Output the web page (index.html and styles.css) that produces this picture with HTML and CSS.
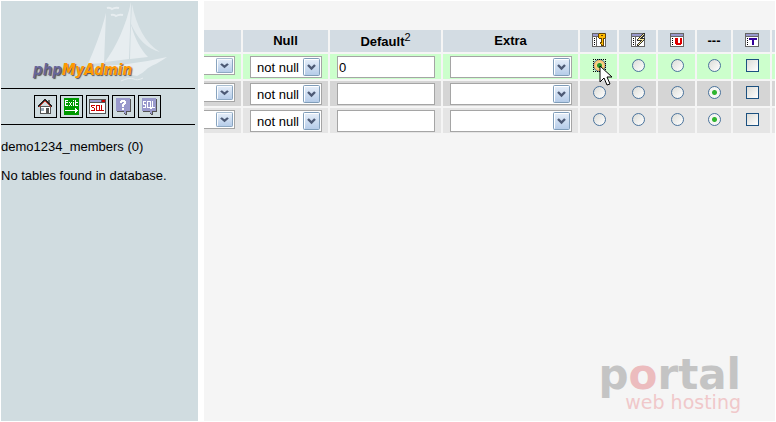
FILE: index.html
```
<!DOCTYPE html>
<html lang="en">
<head>
    <meta charset="utf-8">
    <title>phpMyAdmin</title>
    <link rel="stylesheet" href="styles.css">
</head>
<body>

    <!-- Left navigation -->
    <div class="nav">
        <a class="logo" href="#">
            <svg class="ship" width="82" height="84" viewBox="0 0 82 84">
                <g fill="#e7edf0">
                    <path d="M19 12 C14 32 7 49 1 63 L17 62 Z"/>
                    <path d="M44 1 C39 25 29 46 18 61 L42 58 Z"/>
                    <path d="M45 3 C49 24 58 42 73 51 C60 48 50 37 44 23 Z" opacity=".8"/>
                    <path d="M44 24 C48 38 54 49 61 56 L43 58 Z"/>
                    <path d="M1 66 C25 65 55 62 80 56 C72 62 66 64 61 67 C58 70 54 73 50 75 C35 71 18 72 3 72 Z"/>
                </g>
                <g fill="none" stroke="#e7edf0" stroke-width="2">
                    <path d="M20 7 q3 -1 5 1 q3 -2 7 -1"/>
                    <path d="M24 14 q3 -1 5 1 q3 -2 7 -1"/>
                    <path d="M34 80 q8 -4 13 -2 q3 2 9 -1" stroke-width="1"/>
                </g>
            </svg>
            <span class="name">php<b>MyAdmin</b></span>
        </a>
        <div class="links">
            <a href="#" title="Home"><svg width="15" height="15" viewBox="0 0 15 15" shape-rendering="crispEdges">
                <path d="M2 7h10v7H2z" fill="#fff" stroke="#555"/>
                <path d="M10 1h2v5h-2z" fill="#666"/>
                <path d="M0 8L7 1l7 7" fill="none" stroke="#222" stroke-width="2"/>
                <path d="M1 8L7 2l6 6" fill="none" stroke="#d63a2c" stroke-width="1"/>
                <path d="M3 9h3v3H3z" fill="#9ab"/>
                <path d="M8 9h3v6H8z" fill="#555"/>
            </svg></a>
            <a href="#" title="Exit"><svg width="15" height="17" viewBox="0 0 15 17" shape-rendering="crispEdges">
                <path d="M0 0h15v17H0z" fill="#090"/>
                <path d="M1 2h3v1H2v1h2v1H2v2h2v1H1zM5 4h1v1H5zM7 4h1v1H7zM6 5h1v2H6zM5 7h1v1H5zM7 7h1v1H7zM9 2h1v1H9zM9 4h1v4H9zM11 2h1v2h2v1h-2v2h2v1h-3z" fill="#fff"/>
                <path d="M1 12h10v-2h1v1h1v1h1v1h-1v1h-1v1h-1v-2H1z" fill="#fff"/>
            </svg></a>
            <a href="#" title="Query window"><svg width="17" height="15" viewBox="0 0 17 15" shape-rendering="crispEdges">
                <path d="M0 0h17v15H0z" fill="#555"/>
                <path d="M1 1h11v2H1z" fill="#99c"/>
                <path d="M13 1h3v2h-3z" fill="#c00"/>
                <path d="M1 4h15v10H1z" fill="#fff"/>
                <path d="M2 6h4v1H3v1h2v1h1v3H2v-1h3V9H3V8H2zM7 6h4v5h1v1H7zM8 7v4h2V7zM12 6h1v5h2v1h-3z" fill="#c00" fill-rule="evenodd"/>
            </svg></a>
            <a href="#" title="phpMyAdmin documentation"><svg width="15" height="17" viewBox="0 0 15 17" shape-rendering="crispEdges">
                <path d="M1 1h14v13h-4v3H9v-1H8v-2H1z" fill="#555"/>
                <path d="M0 0h14v13h-4v3H9v-1H8v-2H0z" fill="#99c"/>
                <path d="M4 3h1V2h4v1h1v3H9v1H8v2H6V6h1V5h1V4H6v1H4zM6 10h2v2H6z" fill="#fff"/>
            </svg></a>
            <a href="#" title="MySQL documentation"><svg width="15" height="17" viewBox="0 0 15 17" shape-rendering="crispEdges">
                <path d="M1 1h14v13h-4v3H9v-1H8v-2H1z" fill="#555"/>
                <path d="M0 0h14v13h-4v3H9v-1H8v-2H0z" fill="#99c"/>
                <path d="M1 3h3v1H2v2h2v4H1V9h2V7H1zM5 3h4v6h1v2H8v-1H5zM6 4v5h2V4zM10 3h1v6h2v1h-3z" fill="#fff" fill-rule="evenodd"/>
            </svg></a>
        </div>
        <p>demo1234_members (0)</p>
        <p>No tables found in database.</p>
    </div>

    <!-- Field editor -->
    <form class="main">
        <table>
            <colgroup>
                <col class="w37"><col class="w85"><col class="w111"><col class="w135">
                <col class="w37"><col class="w37"><col class="w37"><col class="w34"><col class="w37"><col>
            </colgroup>
            <tr>
                <th></th>
                <th>Null</th>
                <th>Default<sup>2</sup></th>
                <th>Extra</th>
                <th title="Primary"><svg width="14" height="14" viewBox="0 0 14 14" shape-rendering="crispEdges">
                    <path d="M0 0h14v14H0z" fill="#666"/><path d="M1 1h12v2H1z" fill="#99c"/><path d="M1 4h3v9H1zM5 4h8v9H5z" fill="#fff"/>
                    <path d="M2 5h1v1H2zM2 7h1v1H2zM2 9h1v1H2zM2 11h1v1H2z" fill="#000"/>
                    <path d="M7 0h6v1h1v4h-1v1h-1v7H9v-2H8V9h1V6H7V5H6V1h1z" fill="#640"/>
                    <path d="M7 1h6v4h-2v7h-1v-1H9v-1h1V5H7z" fill="#fb0"/><path d="M9 2h2v1H9z" fill="#640"/>
                </svg></th>
                <th title="Index"><svg width="14" height="14" viewBox="0 0 14 14" shape-rendering="crispEdges">
                    <path d="M0 0h14v14H0z" fill="#666"/><path d="M1 1h12v2H1z" fill="#99c"/><path d="M1 4h3v9H1zM5 4h8v9H5z" fill="#fff"/>
                    <path d="M2 5h1v1H2zM2 7h1v1H2zM2 9h1v1H2zM2 11h1v1H2z" fill="#000"/>
                    <path d="M12 0h2v2l-3 3h3v2l-7 6H6v-2l3-3H6V6z" fill="#333"/>
                    <path d="M12 1h1L9 5v1h4L7 12v-1l4-4H7V6z" fill="#fe9"/>
                </svg></th>
                <th title="Unique"><svg width="14" height="14" viewBox="0 0 14 14" shape-rendering="crispEdges">
                    <path d="M0 0h14v14H0z" fill="#666"/><path d="M1 1h12v2H1z" fill="#99c"/><path d="M1 4h12v9H1z" fill="#fff"/>
                    <path d="M2 5h1v1H2zM2 7h1v1H2zM2 9h1v1H2zM2 11h1v1H2z" fill="#000"/>
                    <path d="M5 5h3v5h2V5h2v6h-1v1H6v-1H5z" fill="#d00"/>
                </svg></th>
                <th>---</th>
                <th title="Fulltext"><svg width="14" height="14" viewBox="0 0 14 14" shape-rendering="crispEdges">
                    <path d="M0 0h14v14H0z" fill="#666"/><path d="M1 1h12v2H1z" fill="#99c"/><path d="M1 4h12v9H1z" fill="#fff"/>
                    <path d="M2 5h1v1H2zM2 7h1v1H2zM2 9h1v1H2zM2 11h1v1H2z" fill="#000"/>
                    <path d="M4 5h8v2h-3v5H7V7H4z" fill="#309"/>
                </svg></th>
                <th></th>
            </tr>
            <tr class="marked">
                <td><div class="cut"><select class="short" aria-label="Attributes 1"><option></option></select></div></td>
                <td><select class="null" aria-label="Null 1"><option>not null</option><option>null</option></select></td>
                <td><input type="text" value="0" aria-label="Default 1"></td>
                <td><select class="extra" aria-label="Extra 1"><option></option><option>auto_increment</option></select></td>
                <td><span class="pointed"><input type="radio" class="hot" name="key1" aria-label="Primary 1" checked>
                    <svg class="cursor" width="13" height="22" viewBox="0 0 13 22">
                        <path d="M1 1v16l4-4 3 7 3-1-3-7h5z" fill="#fff" stroke="#000"/>
                    </svg></span></td>
                <td><input type="radio" name="key1" aria-label="Index 1"></td>
                <td><input type="radio" name="key1" aria-label="Unique 1"></td>
                <td><input type="radio" name="key1" aria-label="No key 1"></td>
                <td><input type="checkbox" aria-label="Fulltext 1"></td>
                <td></td>
            </tr>
            <tr class="odd">
                <td><div class="cut"><select class="short" aria-label="Attributes 2"><option></option></select></div></td>
                <td><select class="null" aria-label="Null 2"><option>not null</option><option>null</option></select></td>
                <td><input type="text" aria-label="Default 2"></td>
                <td><select class="extra" aria-label="Extra 2"><option></option><option>auto_increment</option></select></td>
                <td><input type="radio" name="key2" aria-label="Primary 2"></td>
                <td><input type="radio" name="key2" aria-label="Index 2"></td>
                <td><input type="radio" name="key2" aria-label="Unique 2"></td>
                <td><input type="radio" name="key2" aria-label="No key 2" checked></td>
                <td><input type="checkbox" aria-label="Fulltext 2"></td>
                <td></td>
            </tr>
            <tr class="even">
                <td><div class="cut"><select class="short" aria-label="Attributes 3"><option></option></select></div></td>
                <td><select class="null" aria-label="Null 3"><option>not null</option><option>null</option></select></td>
                <td><input type="text" aria-label="Default 3"></td>
                <td><select class="extra" aria-label="Extra 3"><option></option><option>auto_increment</option></select></td>
                <td><input type="radio" name="key3" aria-label="Primary 3"></td>
                <td><input type="radio" name="key3" aria-label="Index 3"></td>
                <td><input type="radio" name="key3" aria-label="Unique 3"></td>
                <td><input type="radio" name="key3" aria-label="No key 3" checked></td>
                <td><input type="checkbox" aria-label="Fulltext 3"></td>
                <td></td>
            </tr>
        </table>

        <div class="brand">
            <div class="portal">p<span>o</span>rtal</div>
            <div class="hosting">web hosting</div>
        </div>
    </form>

</body>
</html>
```
FILE: styles.css
```
* {
    box-sizing: border-box;
}
body {
    display: flex;
    gap: 6px;
    min-height: 100vh;
    margin: 0;
    padding: 1px;
    background: #fff;
    color: #000;
    font-family: Arial, "Liberation Sans", sans-serif;
    font-size: 13px;
    line-height: 15px;
}

/* Left navigation */
.nav {
    flex: 0 0 197px;
    padding-right: 3px;
    background: #d0dce0;
}
.nav p {
    margin: 14px 0;
}
.logo {
    display: block;
    position: relative;
    height: 87px;
    padding: 60px 0 0 32px;
    text-decoration: none;
}
.ship {
    position: absolute;
    left: 86px;
    top: 0;
}
.name {
    position: relative;
    color: #669;
    font: italic bold 15px/18px "DejaVu Sans Condensed", "DejaVu Sans", sans-serif;
    text-shadow: 1px 1px 1px #555;
}
.name b {
    color: #f90;
}
.links {
    display: flex;
    justify-content: center;
    gap: 3px;
    padding: 6px 1px 6px 0;
    border-top: 1px solid #000;
    border-bottom: 1px solid #000;
}
.links a {
    display: flex;
    align-items: center;
    justify-content: center;
    width: 23px;
    height: 23px;
    border: 1px solid #000;
}

/* Field editor */
.main {
    display: flex;
    flex: 1;
    flex-direction: column;
    justify-content: space-between;
    min-width: 0;
    padding-top: 27px;
    background: #f5f5f5;
    overflow: hidden;
}
table {
    width: calc(100% + 4px);
    margin: 0 -2px;
    border-spacing: 2px;
    table-layout: fixed;
}
.w34 { width: 34px; }
.w37 { width: 37px; }
.w85 { width: 85px; }
.w111 { width: 111px; }
.w135 { width: 135px; }
th, td {
    padding: 0;
    text-align: center;
}
th {
    height: 22px;
    padding-bottom: 2px;
    background: #d3dce3;
}
th svg {
    display: block;
    margin: 0 auto;
}
td {
    height: 25px;
    padding: 2px 0 0 1px;
    vertical-align: top;
}
sup {
    font-size: 11px;
    font-weight: normal;
    line-height: 15px;
}
.marked td { background: #cfc; }
.odd td { background: #d5d5d5; }
.even td { background: #e5e5e5; }

input, select {
    display: block;
    margin: 0 auto;
    font: inherit;
}
select, input[type=text] {
    height: 22px;
    border: 1px solid #a5a5a5;
    border-radius: 0;
    background: #fff;
}
input[type=text] {
    width: 98px;
    padding: 0 1px;
}
select {
    appearance: none;
    padding: 0 0 0 6px;
    color: #000;
    background: #fff url("data:image/svg+xml,%3Csvg xmlns='http://www.w3.org/2000/svg' viewBox='0 0 17 18' preserveAspectRatio='none'%3E%3Cdefs%3E%3ClinearGradient id='g' x2='0' y2='1'%3E%3Cstop stop-color='%23e8f0fa'/%3E%3Cstop offset='1' stop-color='%23b4cbe8'/%3E%3C/linearGradient%3E%3C/defs%3E%3Crect x='.5' y='.5' width='16' height='17' rx='1' fill='url(%23g)' stroke='%237f9db9'/%3E%3Cpath d='M1.500 16.500V1.500H15.500' fill='none' stroke='%23fff'/%3E%3Cpath d='M5 7l3.500 3.500L12 7' fill='none' stroke='%234d5a75' stroke-width='2.400'/%3E%3C/svg%3E") no-repeat right 1px top 1px / 17px 18px;
}
.null { width: 72px; }
.extra { width: 122px; }
.short {
    flex: none;
    width: 60px;
    height: 19px;
    margin: 0;
    background-size: 17px 15px;
}
/* the select runs out of view on the left */
.cut {
    display: flex;
    justify-content: flex-end;
    padding-right: 6px;
}

input[type=radio], input[type=checkbox] {
    appearance: none;
    width: 13px;
    height: 13px;
    margin-top: 3px;
    border: 1px solid #1c5180;
    background: linear-gradient(135deg, #dcdcd7, #fff);
}
input[type=radio] {
    border-color: #4a739c;
    border-radius: 50%;
}
input[type=radio]:checked {
    background: radial-gradient(circle, #2fb52f 2px, #f6f6f4 3px);
}
input.hot:checked {
    margin: 0;
    background: radial-gradient(circle, #2a9a2a 2px, #fbd58e 3px, #f0a840);
}
.pointed {
    display: block;
    position: relative;
    width: 13px;
    height: 13px;
    margin: 3px auto 0;
    outline: 1px dotted #000;
    outline-offset: -1px;
}
.cursor {
    position: absolute;
    left: 6px;
    top: 6px;
}

/* Hosting watermark */
.brand {
    align-self: flex-end;
    margin-right: 34px;
    padding-bottom: 10px;
    font-family: "DejaVu Sans", sans-serif;
    text-align: right;
}
.portal {
    color: #c4c4c4;
    font-size: 42px;
    font-weight: bold;
    line-height: 36px;
}
.portal span {
    color: #ecbcbe;
}
.hosting {
    color: #f0c8ca;
    font-size: 19px;
    line-height: 18px;
}
```
